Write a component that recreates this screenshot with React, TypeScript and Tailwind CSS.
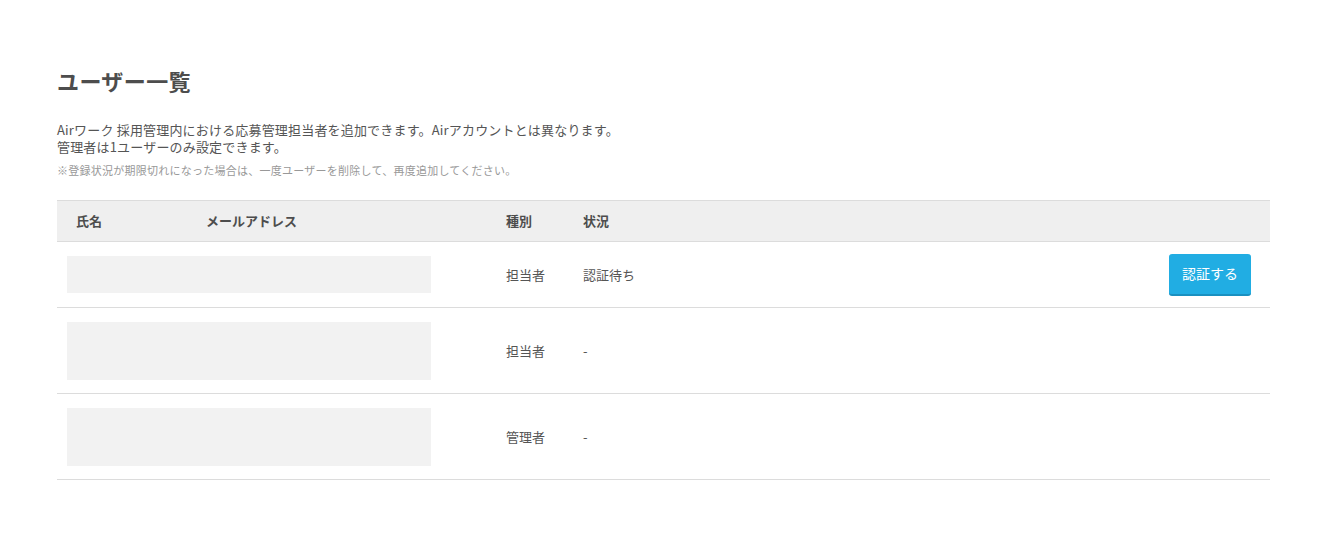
import React from 'react';

type User = {
  role: string;
  status: string;
  pending: boolean;
};

const users: User[] = [
  { role: '担当者', status: '認証待ち', pending: true },
  { role: '担当者', status: '-', pending: false },
  { role: '管理者', status: '-', pending: false },
];

function App() {
  return (
    <div className="min-h-screen bg-white text-[#555] [font-family:'Noto_Sans_CJK_JP','Noto_Sans',sans-serif]">
      <div className="px-[57px] pt-[64px] w-[1327px]">
        <h1 className="text-[22px] tracking-[0.4px] font-bold leading-[32px] text-[#4d4d4d]">ユーザー一覧</h1>

        <div className="mt-[25px] text-[13px] tracking-[0.18px] leading-[17px]">
          <p>Airワーク 採用管理内における応募管理担当者を追加できます。Airアカウントとは異なります。</p>
          <p>管理者は1ユーザーのみ設定できます。</p>
        </div>
        <p className="mt-[8px] text-[11px] tracking-[0.25px] leading-[15px] text-[#999]">
          ※登録状況が期限切れになった場合は、一度ユーザーを削除して、再度追加してください。
        </p>

        <div className="mt-[22px] w-[1213px]">
          <div className="flex items-center h-[42px] bg-[#efefef] border-t border-b border-[#dcdcdc] pl-[19px] text-[13px] font-bold text-[#4d4d4d]">
            <div className="w-[130px]">氏名</div>
            <div className="w-[300px]">メールアドレス</div>
            <div className="w-[77px]">種別</div>
            <div className="flex-1">状況</div>
          </div>

          {users.map((u, i) => (
            <div
              key={i}
              className={`flex items-center border-b border-[#dcdcdc] pl-[10px] pr-[19px] text-[13px] ${
                u.pending ? 'h-[66px]' : 'h-[86px]'
              }`}
            >
              <div className={`w-[364px] bg-[#f2f2f2] ${u.pending ? 'h-[37px]' : 'h-[58px]'}`} />
              <div className="ml-[75px] w-[77px]">{u.role}</div>
              <div className="flex-1">{u.status}</div>
              {u.pending && (
                <button className="h-[42px] w-[82px] rounded-[3px] bg-[#21ade3] border-b-2 border-[#1a90c0] text-white text-[14px]">
                  認証する
                </button>
              )}
            </div>
          ))}
        </div>
      </div>
    </div>
  );
}

export default App;
